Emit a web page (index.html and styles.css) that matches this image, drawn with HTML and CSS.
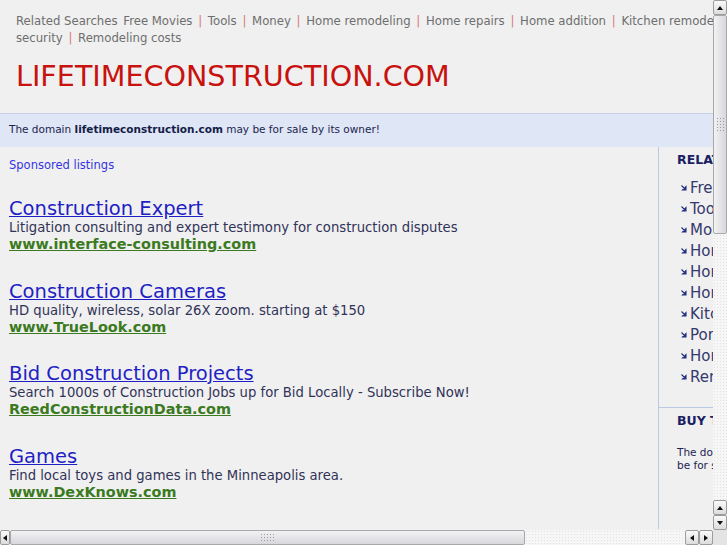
FILE: index.html
```html
<!DOCTYPE html>
<html lang="en">
<head>
  <meta charset="UTF-8">
  <title>lifetimeconstruction.com</title>
  <link rel="stylesheet" href="styles.css">
</head>
<body>
  <div class="window">
    <div class="viewport">
      <div class="page">
        <div class="top-links">
          <span class="label">Related Searches</span>
          <a href="#">Free Movies</a> <span class="sep">|</span>
          <a href="#">Tools</a> <span class="sep">|</span>
          <a href="#">Money</a> <span class="sep">|</span>
          <a href="#">Home remodeling</a> <span class="sep">|</span>
          <a href="#">Home repairs</a> <span class="sep">|</span>
          <a href="#">Home addition</a> <span class="sep">|</span>
          <a href="#">Kitchen remodeling</a> <span class="sep">|</span>
          <a href="#">Porch ideas</a> <span class="sep">|</span>
          <a href="#">Home security</a> <span class="sep">|</span>
          <a href="#">Remodeling costs</a>
        </div>

        <h1 class="domain">LIFETIMECONSTRUCTION.COM</h1>

        <div class="banner">
          The domain <b>lifetimeconstruction.com</b> may be for sale by its owner!
        </div>

        <div class="main">
          <div class="listings">
            <p class="sponsored">Sponsored listings</p>

            <div class="ad">
              <a class="ad-title" href="#">Construction Expert</a>
              <div class="ad-desc">Litigation consulting and expert testimony for construction disputes</div>
              <a class="ad-url" href="#">www.interface-consulting.com</a>
            </div>

            <div class="ad">
              <a class="ad-title" href="#">Construction Cameras</a>
              <div class="ad-desc">HD quality, wireless, solar 26X zoom. starting at $150</div>
              <a class="ad-url" href="#">www.TrueLook.com</a>
            </div>

            <div class="ad">
              <a class="ad-title" href="#">Bid Construction Projects</a>
              <div class="ad-desc">Search 1000s of Construction Jobs up for Bid Locally - Subscribe Now!</div>
              <a class="ad-url" href="#">ReedConstructionData.com</a>
            </div>

            <div class="ad">
              <a class="ad-title" href="#">Games</a>
              <div class="ad-desc">Find local toys and games in the Minneapolis area.</div>
              <a class="ad-url" href="#">www.DexKnows.com</a>
            </div>
          </div>

          <div class="sidebar">
            <div class="side-box">
              <h3>RELATED SEARCHES</h3>
              <ul class="side-list">
                <li><svg class="arr" viewBox="0 0 6 6"><path d="M0.5 0.5 L4.5 4.5 M1.5 5 H5 V1.5 Z"/></svg><a href="#">Free Movies</a></li>
                <li><svg class="arr" viewBox="0 0 6 6"><path d="M0.5 0.5 L4.5 4.5 M1.5 5 H5 V1.5 Z"/></svg><a href="#">Tools</a></li>
                <li><svg class="arr" viewBox="0 0 6 6"><path d="M0.5 0.5 L4.5 4.5 M1.5 5 H5 V1.5 Z"/></svg><a href="#">Money</a></li>
                <li><svg class="arr" viewBox="0 0 6 6"><path d="M0.5 0.5 L4.5 4.5 M1.5 5 H5 V1.5 Z"/></svg><a href="#">Home remodeling</a></li>
                <li><svg class="arr" viewBox="0 0 6 6"><path d="M0.5 0.5 L4.5 4.5 M1.5 5 H5 V1.5 Z"/></svg><a href="#">Home repairs</a></li>
                <li><svg class="arr" viewBox="0 0 6 6"><path d="M0.5 0.5 L4.5 4.5 M1.5 5 H5 V1.5 Z"/></svg><a href="#">Home addition</a></li>
                <li><svg class="arr" viewBox="0 0 6 6"><path d="M0.5 0.5 L4.5 4.5 M1.5 5 H5 V1.5 Z"/></svg><a href="#">Kitchen remodeling</a></li>
                <li><svg class="arr" viewBox="0 0 6 6"><path d="M0.5 0.5 L4.5 4.5 M1.5 5 H5 V1.5 Z"/></svg><a href="#">Porch ideas</a></li>
                <li><svg class="arr" viewBox="0 0 6 6"><path d="M0.5 0.5 L4.5 4.5 M1.5 5 H5 V1.5 Z"/></svg><a href="#">Home security</a></li>
                <li><svg class="arr" viewBox="0 0 6 6"><path d="M0.5 0.5 L4.5 4.5 M1.5 5 H5 V1.5 Z"/></svg><a href="#">Remodeling costs</a></li>
              </ul>
            </div>
            <div class="side-box buy">
              <h3>BUY THIS DOMAIN</h3>
              <p>The domain lifetimeconstruction.com may<br>be for sale by its owner!</p>
            </div>
          </div>
        </div>
      </div>
    </div>

    <div class="vscroll">
      <div class="sb-btn up"></div>
      <div class="sb-thumb vthumb"><span class="grip"></span></div>
      <div class="sb-track"></div>
      <div class="sb-btn up"></div>
      <div class="sb-btn down"></div>
    </div>

    <div class="hscroll">
      <div class="sb-btn left narrow"></div>
      <div class="sb-thumb hthumb"><span class="grip"></span></div>
      <div class="sb-track"></div>
      <div class="sb-btn left"></div>
      <div class="sb-btn right"></div>
    </div>

    <div class="corner"></div>
  </div>
</body>
</html>
```

FILE: styles.css
```css
html, body {
  margin: 0;
  padding: 0;
  background: #f0f0f0;
  font-family: "DejaVu Sans", "Liberation Sans", sans-serif;
}
a {
  text-decoration: none;
}
.window {
  display: grid;
  grid-template-columns: 713px 14px;
  grid-template-rows: 530px 15px;
  width: 727px;
  height: 545px;
  overflow: hidden;
}
.viewport {
  overflow: hidden;
}
.page {
  width: 935px;
}

/* top related links */
.top-links {
  padding: 13px 0 0 16px;
  font-size: 11.7px;
  line-height: 17px;
  color: #6e6e6e;
  width: 860px;
}
.top-links a {
  color: #6e6e6e;
}
.top-links .label {
  margin-right: 2px;
}
.top-links .sep {
  color: #d87878;
  margin: 0 2px;
}
.domain {
  margin: 0;
  padding: 12px 0 0 16px;
  height: 54px;
  font-size: 28.6px;
  font-weight: normal;
  line-height: 34px;
  color: #c8120e;
}

/* sale banner */
.banner {
  height: 33px;
  line-height: 31px;
  border-top: 1px solid #c8d3ea;
  background: #dfe6f5;
  padding-left: 9px;
  font-size: 10.5px;
  color: #1c2450;
}
.banner b {
  color: #141c48;
}

/* main columns */
.main {
  display: flex;
  height: 382px;
}
.listings {
  width: 649px;
  padding-left: 9px;
  border-right: 1px solid #b9c9e6;
}
.sponsored {
  margin: 11px 0 26px;
  font-size: 11.5px;
  line-height: 15px;
  color: #3434e0;
}
.ad {
  display: flex;
  flex-direction: column;
  align-items: flex-start;
  margin-bottom: 28.5px;
}
.ad-title {
  font-size: 19.5px;
  line-height: 20px;
  color: #1f1fc4;
  text-decoration: underline;
}
.ad-desc {
  font-size: 13.2px;
  line-height: 17px;
  color: #303358;
}
.ad-url {
  font-size: 14.4px;
  font-weight: bold;
  line-height: 17px;
  color: #3b7a1e;
  text-decoration: underline;
}

/* sidebar */
.sidebar {
  width: 276px;
}
.side-box {
  padding: 5px 0 0 18px;
}
.side-box h3 {
  margin: 0;
  font-size: 12.5px;
  line-height: 16px;
  color: #1a2163;
}
.side-list {
  list-style: none;
  margin: 10px 0 0;
  padding: 0 0 0 4px;
}
.side-list li {
  height: 21px;
  line-height: 21px;
  display: flex;
  align-items: center;
  gap: 3px;
}
.arr {
  width: 6px;
  height: 6px;
  flex: none;
  margin-top: -2px;
  fill: #243080;
  stroke: #243080;
  stroke-width: 1.1;
}
.side-list a {
  font-size: 15px;
  color: #34396e;
}
.buy {
  margin-top: 19px;
  border-top: 1px solid #b9c9e6;
  padding-top: 5px;
}
.buy p {
  margin: 17px 0 0;
  font-size: 10.5px;
  line-height: 13px;
  color: #1c2450;
}

/* fake scrollbars */
.vscroll, .hscroll {
  display: flex;
  background: #f6f6f6;
  background-image: radial-gradient(#e2e2e2 0.6px, transparent 0.8px);
  background-size: 3px 3px;
}
.vscroll {
  flex-direction: column;
}
.sb-btn {
  flex: none;
  width: 14px;
  height: 15px;
  box-sizing: border-box;
  border: 1px solid #9c9c9c;
  border-radius: 2px;
  background: linear-gradient(#fafafa, #dcdcdc);
  display: flex;
  align-items: center;
  justify-content: center;
}
.sb-btn.narrow {
  width: 10px;
}
.sb-btn::after {
  content: "";
  width: 0;
  height: 0;
  border: 3px solid transparent;
}
.sb-btn.up::after {
  border-bottom: 4px solid #111;
  border-top-width: 0;
}
.sb-btn.down::after {
  border-top: 4px solid #111;
  border-bottom-width: 0;
}
.sb-btn.left::after {
  border-right: 4px solid #111;
  border-left-width: 0;
}
.sb-btn.right::after {
  border-left: 4px solid #111;
  border-right-width: 0;
}
.sb-thumb {
  flex: none;
  box-sizing: border-box;
  border: 1px solid #a8a8a8;
  border-radius: 2px;
  display: flex;
  align-items: center;
  justify-content: center;
}
.vthumb {
  height: 219px;
  background: linear-gradient(90deg, #f2f2f4, #d8d8dc);
}
.hthumb {
  width: 515px;
  background: linear-gradient(#f2f2f4, #d8d8dc);
}
.grip {
  display: block;
  background-image: radial-gradient(#9a9a9a 0.7px, transparent 1px);
  background-size: 3px 3px;
}
.vthumb .grip {
  width: 9px;
  height: 15px;
}
.hthumb .grip {
  width: 15px;
  height: 9px;
}
.sb-track {
  flex: 1;
}
.corner {
  background: #e4e4e4;
}
```
